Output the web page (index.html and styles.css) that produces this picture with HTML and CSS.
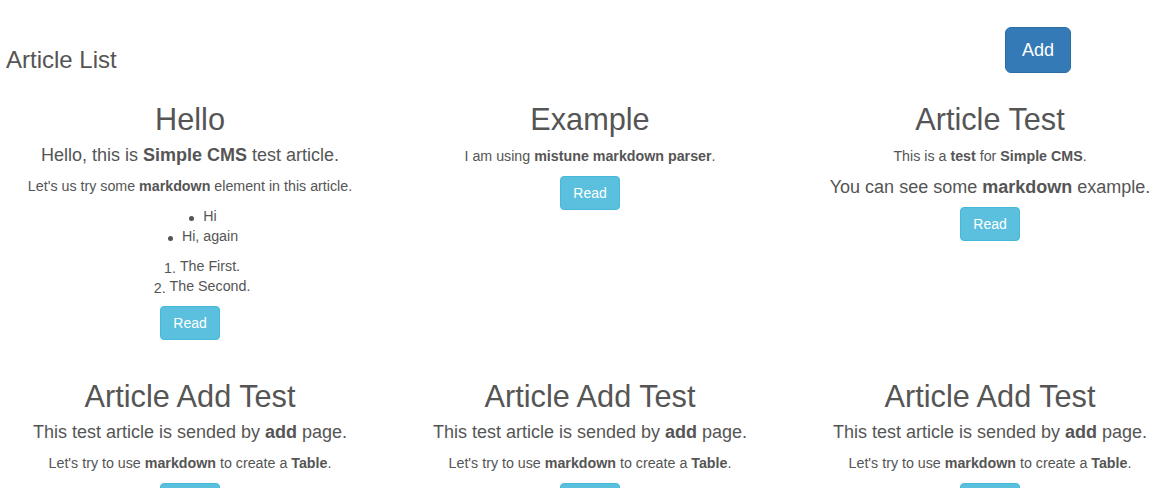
FILE: index.html
```html
<!DOCTYPE html>
<html lang="en">
<head>
<meta charset="utf-8">
<title>Article List</title>
<link rel="stylesheet" href="styles.css">
</head>
<body>
<header class="page-header">
  <h3 class="page-title">Article List</h3>
  <a class="btn btn-primary btn-lg" href="#">Add</a>
</header>
<main class="articles">
  <article class="article">
    <h2 class="article-title">Hello</h2>
    <h4 class="md-h4">Hello, this is <strong>Simple CMS</strong> test article.</h4>
    <p class="md-p">Let's us try some <strong>markdown</strong> element in this article.</p>
    <ul class="md-list md-ul">
      <li><span class="item">Hi</span></li>
      <li><span class="item">Hi, again</span></li>
    </ul>
    <ol class="md-list md-ol">
      <li><span class="item">The First.</span></li>
      <li><span class="item">The Second.</span></li>
    </ol>
    <div class="actions"><a class="btn btn-info" href="#">Read</a></div>
  </article>
  <article class="article">
    <h2 class="article-title">Example</h2>
    <p class="md-p">I am using <strong>mistune markdown parser</strong>.</p>
    <div class="actions"><a class="btn btn-info" href="#">Read</a></div>
  </article>
  <article class="article">
    <h2 class="article-title">Article Test</h2>
    <p class="md-p">This is a <strong>test</strong> for <strong>Simple CMS</strong>.</p>
    <h4 class="md-h4 md-h4-late">You can see some <strong>markdown</strong> example.</h4>
    <div class="actions"><a class="btn btn-info" href="#">Read</a></div>
  </article>
  <article class="article">
    <h2 class="article-title">Article Add Test</h2>
    <h4 class="md-h4">This test article is sended by <strong>add</strong> page.</h4>
    <p class="md-p">Let's try to use <strong>markdown</strong> to create a <strong>Table</strong>.</p>
    <div class="actions"><a class="btn btn-info" href="#">Read</a></div>
  </article>
  <article class="article">
    <h2 class="article-title">Article Add Test</h2>
    <h4 class="md-h4">This test article is sended by <strong>add</strong> page.</h4>
    <p class="md-p">Let's try to use <strong>markdown</strong> to create a <strong>Table</strong>.</p>
    <div class="actions"><a class="btn btn-info" href="#">Read</a></div>
  </article>
  <article class="article">
    <h2 class="article-title">Article Add Test</h2>
    <h4 class="md-h4">This test article is sended by <strong>add</strong> page.</h4>
    <p class="md-p">Let's try to use <strong>markdown</strong> to create a <strong>Table</strong>.</p>
    <div class="actions"><a class="btn btn-info" href="#">Read</a></div>
  </article>
</main>
</body>
</html>
```
FILE: styles.css
```css
html, body {
  margin: 0;
  padding: 0;
  background: #fff;
  overflow: hidden;
}

body {
  font-family: "Liberation Sans", Arial, sans-serif;
  font-size: 14px;
  line-height: 20px;
  color: #555;
  width: 1164px;
}

strong {
  font-weight: 700;
}

.page-header {
  display: flex;
  justify-content: space-between;
  align-items: flex-start;
  padding: 27px 93px 0 6px;
}

.page-title {
  margin: 20px 0 10px;
  font-size: 24px;
  font-weight: 400;
  line-height: 26.4px;
}

.articles {
  display: grid;
  grid-template-columns: repeat(3, 380px);
  column-gap: 20px;
  row-gap: 20px;
  align-items: start;
}

.article {
  text-align: center;
}

.article-title {
  margin: 20px 0 10px;
  font-size: 30.7px;
  font-weight: 400;
  line-height: 33px;
}

.md-h4 {
  margin: 10px 0;
  font-size: 18px;
  font-weight: 400;
  line-height: 19.8px;
}

.md-h4-late {
  margin-top: 12px;
  margin-bottom: 9px;
}

.md-p {
  margin: 0 0 10px;
  font-size: 14.25px;
}

.md-list {
  margin: 0 0 10px;
  padding-left: 40px;
  list-style: none;
  font-size: 14.25px;
}

.md-ol {
  counter-reset: item;
}

.md-ol li {
  counter-increment: item;
}

.item {
  position: relative;
}

.md-ul .item::before {
  content: "";
  position: absolute;
  right: calc(100% + 9px);
  top: 8px;
  width: 5px;
  height: 5px;
  border-radius: 50%;
  background: #555;
}

.md-ol .item::before {
  content: counter(item) ".";
  position: absolute;
  right: calc(100% + 4px);
  top: 0;
  white-space: nowrap;
}

.actions {
  margin: 0;
}

.btn {
  display: inline-block;
  padding: 6px 12px;
  font-size: 14px;
  line-height: 20px;
  border: 1px solid transparent;
  border-radius: 4px;
  text-decoration: none;
  color: #fff;
  vertical-align: middle;
  white-space: nowrap;
}

.btn-info {
  background-color: #5bc0de;
  border-color: #46b8da;
}

.btn-primary {
  background-color: #337ab7;
  border-color: #2e6da4;
}

.btn-lg {
  padding: 10px 16px;
  font-size: 18px;
  line-height: 24px;
  border-radius: 6px;
}
```
